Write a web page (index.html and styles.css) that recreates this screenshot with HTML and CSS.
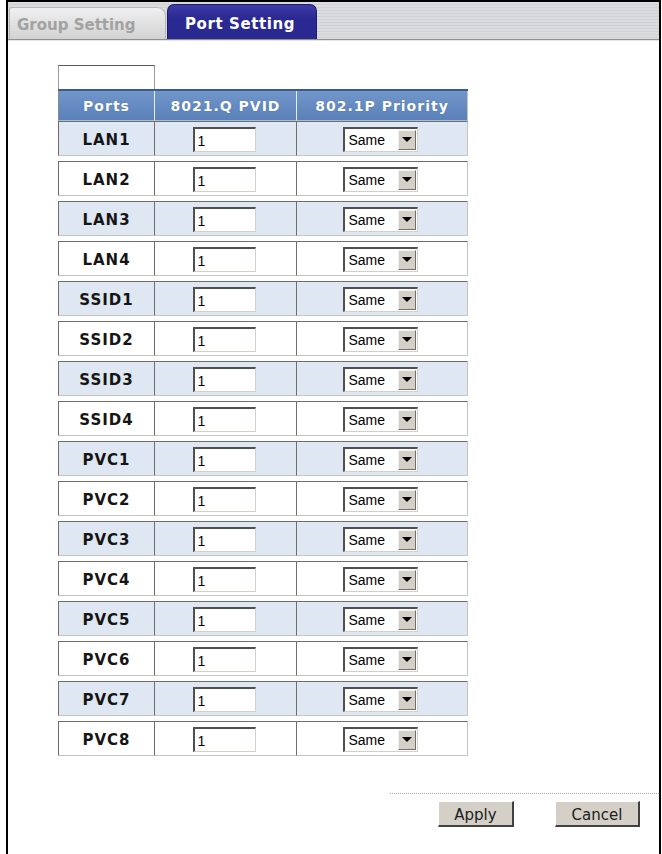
FILE: index.html
```html
<!DOCTYPE html>
<html>
<head>
  <title>Port Setting</title>
  <link rel="stylesheet" href="styles.css">
</head>
<body>
  <div class="frame">
    <div class="tab-bar">
      <div class="tab tab-off">Group Setting</div>
      <div class="tab tab-on">Port Setting</div>
    </div>

    <div class="content">
      <div class="corner-box"></div>
      <div class="ports">
        <div class="row head">
          <div class="cell">Ports</div>
          <div class="cell">8021.Q PVID</div>
          <div class="cell">802.1P Priority</div>
        </div>
        <div class="row odd"><div class="cell name">LAN1</div><div class="cell"><input class="pvid" type="text" value="1"></div><div class="cell"><div class="select"><span class="value">Same</span><span class="arrow"></span></div></div></div>
        <div class="row"><div class="cell name">LAN2</div><div class="cell"><input class="pvid" type="text" value="1"></div><div class="cell"><div class="select"><span class="value">Same</span><span class="arrow"></span></div></div></div>
        <div class="row odd"><div class="cell name">LAN3</div><div class="cell"><input class="pvid" type="text" value="1"></div><div class="cell"><div class="select"><span class="value">Same</span><span class="arrow"></span></div></div></div>
        <div class="row"><div class="cell name">LAN4</div><div class="cell"><input class="pvid" type="text" value="1"></div><div class="cell"><div class="select"><span class="value">Same</span><span class="arrow"></span></div></div></div>
        <div class="row odd"><div class="cell name">SSID1</div><div class="cell"><input class="pvid" type="text" value="1"></div><div class="cell"><div class="select"><span class="value">Same</span><span class="arrow"></span></div></div></div>
        <div class="row"><div class="cell name">SSID2</div><div class="cell"><input class="pvid" type="text" value="1"></div><div class="cell"><div class="select"><span class="value">Same</span><span class="arrow"></span></div></div></div>
        <div class="row odd"><div class="cell name">SSID3</div><div class="cell"><input class="pvid" type="text" value="1"></div><div class="cell"><div class="select"><span class="value">Same</span><span class="arrow"></span></div></div></div>
        <div class="row"><div class="cell name">SSID4</div><div class="cell"><input class="pvid" type="text" value="1"></div><div class="cell"><div class="select"><span class="value">Same</span><span class="arrow"></span></div></div></div>
        <div class="row odd"><div class="cell name">PVC1</div><div class="cell"><input class="pvid" type="text" value="1"></div><div class="cell"><div class="select"><span class="value">Same</span><span class="arrow"></span></div></div></div>
        <div class="row"><div class="cell name">PVC2</div><div class="cell"><input class="pvid" type="text" value="1"></div><div class="cell"><div class="select"><span class="value">Same</span><span class="arrow"></span></div></div></div>
        <div class="row odd"><div class="cell name">PVC3</div><div class="cell"><input class="pvid" type="text" value="1"></div><div class="cell"><div class="select"><span class="value">Same</span><span class="arrow"></span></div></div></div>
        <div class="row"><div class="cell name">PVC4</div><div class="cell"><input class="pvid" type="text" value="1"></div><div class="cell"><div class="select"><span class="value">Same</span><span class="arrow"></span></div></div></div>
        <div class="row odd"><div class="cell name">PVC5</div><div class="cell"><input class="pvid" type="text" value="1"></div><div class="cell"><div class="select"><span class="value">Same</span><span class="arrow"></span></div></div></div>
        <div class="row"><div class="cell name">PVC6</div><div class="cell"><input class="pvid" type="text" value="1"></div><div class="cell"><div class="select"><span class="value">Same</span><span class="arrow"></span></div></div></div>
        <div class="row odd"><div class="cell name">PVC7</div><div class="cell"><input class="pvid" type="text" value="1"></div><div class="cell"><div class="select"><span class="value">Same</span><span class="arrow"></span></div></div></div>
        <div class="row"><div class="cell name">PVC8</div><div class="cell"><input class="pvid" type="text" value="1"></div><div class="cell"><div class="select"><span class="value">Same</span><span class="arrow"></span></div></div></div>
      </div>
    </div>

    <div class="footer">
      <button class="btn btn-apply" type="button">Apply</button>
      <button class="btn btn-cancel" type="button">Cancel</button>
    </div>
  </div>
</body>
</html>
```

FILE: styles.css
```css
body {
  margin: 0;
  padding: 0;
  background-color: #ffffff;
  font-family: "DejaVu Sans", Verdana, sans-serif;
}

.frame {
  margin-left: 6px;
  width: 651px;
  min-height: 860px;
  border: 2px solid #000000;
  border-bottom: none;
}

.tab-bar {
  height: 37px;
  display: flex;
  align-items: flex-end;
  padding-left: 1px;
  background: repeating-linear-gradient(#dadcde 0, #dadcde 2px, #cfd1d4 2px, #cfd1d4 3px);
  border-bottom: 1px solid #8e9094;
  box-shadow: 0 1px 0 #e4e4e4;
}

.tab {
  font-size: 15px;
  font-weight: bold;
  box-sizing: border-box;
}

.tab-off {
  width: 157px;
  height: 32px;
  padding: 8px 0 0 7px;
  color: #a2a2a2;
  background: linear-gradient(#f0f0f0, #d2d2d2);
  border: 1px solid #b8b8b8;
  border-bottom: none;
  border-radius: 3px 9px 0 0;
}

.tab-on {
  width: 150px;
  height: 35px;
  margin-left: 1px;
  padding: 10px 4px 0 0;
  text-align: center;
  letter-spacing: 0.6px;
  color: #ffffff;
  background: linear-gradient(#3d3ca8, #2a2993 40%, #2a2990);
  border: 1px solid #1c1b6e;
  border-bottom: none;
  border-radius: 7px 7px 0 0;
}

.content {
  padding: 25px 0 0 50px;
}

.corner-box {
  width: 95px;
  height: 23px;
  border: 1px solid #9a9a9a;
  border-top-color: #5a5a5a;
  border-bottom: none;
}

.ports {
  width: 410px;
}

.row {
  display: grid;
  grid-template-columns: 96px 142px 172px;
  height: 35px;
  margin-bottom: 5px;
  background-color: #ffffff;
}

.row.odd {
  background-color: #dee7f2;
}

.row.head {
  height: 32px;
  margin-bottom: 0;
  background: linear-gradient(#7196cb, #5a80b9);
  border-top: 2px solid #3c5b8c;
  box-sizing: border-box;
}

.cell {
  display: flex;
  align-items: center;
  justify-content: center;
  box-sizing: border-box;
  border-left: 1px solid #6e6e6e;
  border-top: 1px solid #6e6e6e;
  border-bottom: 1px solid #c4c4c4;
}

.cell:last-child {
  border-right: 1px solid #c4c4c4;
}

.head .cell {
  border-top: none;
  border-bottom: 1px solid #a9bcd6;
  border-left: 1px solid #e6ecf4;
  font-size: 14px;
  font-weight: bold;
  letter-spacing: 1px;
  color: #ffffff;
  text-shadow: 0 0 1px #3e5f91;
}

.head .cell:first-child {
  border-left: 1px solid #8a8a8a;
}

.cell.name {
  font-size: 15px;
  font-weight: bold;
  letter-spacing: 1px;
  color: #151515;
  padding-top: 2px;
}

.pvid {
  width: 63px;
  height: 25px;
  box-sizing: border-box;
  margin: 2px 0 0 -3px;
  padding: 2px 0 0 3px;
  font-family: "Liberation Sans", Arial, sans-serif;
  font-size: 14px;
  color: #000000;
  background-color: #ffffff;
  border-top: 2px solid #505050;
  border-left: 2px solid #505050;
  border-bottom: 1px solid #d4d0c8;
  border-right: 1px solid #d4d0c8;
  outline: none;
}

.select {
  display: flex;
  align-items: center;
  width: 75px;
  height: 25px;
  box-sizing: border-box;
  margin: 2px 0 0 -4px;
  background-color: #ffffff;
  border-top: 2px solid #505050;
  border-left: 2px solid #505050;
  border-bottom: 1px solid #d4d0c8;
  border-right: 1px solid #d4d0c8;
}

.select .value {
  flex: 1;
  padding-left: 4px;
  font-family: "Liberation Sans", Arial, sans-serif;
  font-size: 14px;
  color: #000000;
}

.select .arrow {
  position: relative;
  width: 18px;
  height: 20px;
  margin-right: 1px;
  box-sizing: border-box;
  background-color: #d4d0c8;
  border-top: 1px solid #f2f0ec;
  border-left: 1px solid #f2f0ec;
  border-bottom: 1px solid #707070;
  border-right: 1px solid #707070;
}

.select .arrow::after {
  content: "";
  position: absolute;
  left: 3px;
  top: 6px;
  border-left: 5px solid transparent;
  border-right: 5px solid transparent;
  border-top: 5px solid #000000;
}

.footer {
  display: flex;
  margin: 37px 0 0 382px;
  padding-top: 7px;
  border-top: 1px dotted #a8a8a8;
}

.btn {
  height: 26px;
  padding: 2px 0 0 0;
  font-family: "DejaVu Sans", Verdana, sans-serif;
  font-size: 15px;
  color: #202020;
  background-color: #d4d0c8;
  border-top: 1px solid #ffffff;
  border-left: 1px solid #ffffff;
  border-bottom: 2px solid #404040;
  border-right: 2px solid #404040;
  cursor: pointer;
}

.btn-apply {
  width: 76px;
  margin-left: 48px;
}

.btn-cancel {
  width: 85px;
  margin-left: 41px;
}
```
